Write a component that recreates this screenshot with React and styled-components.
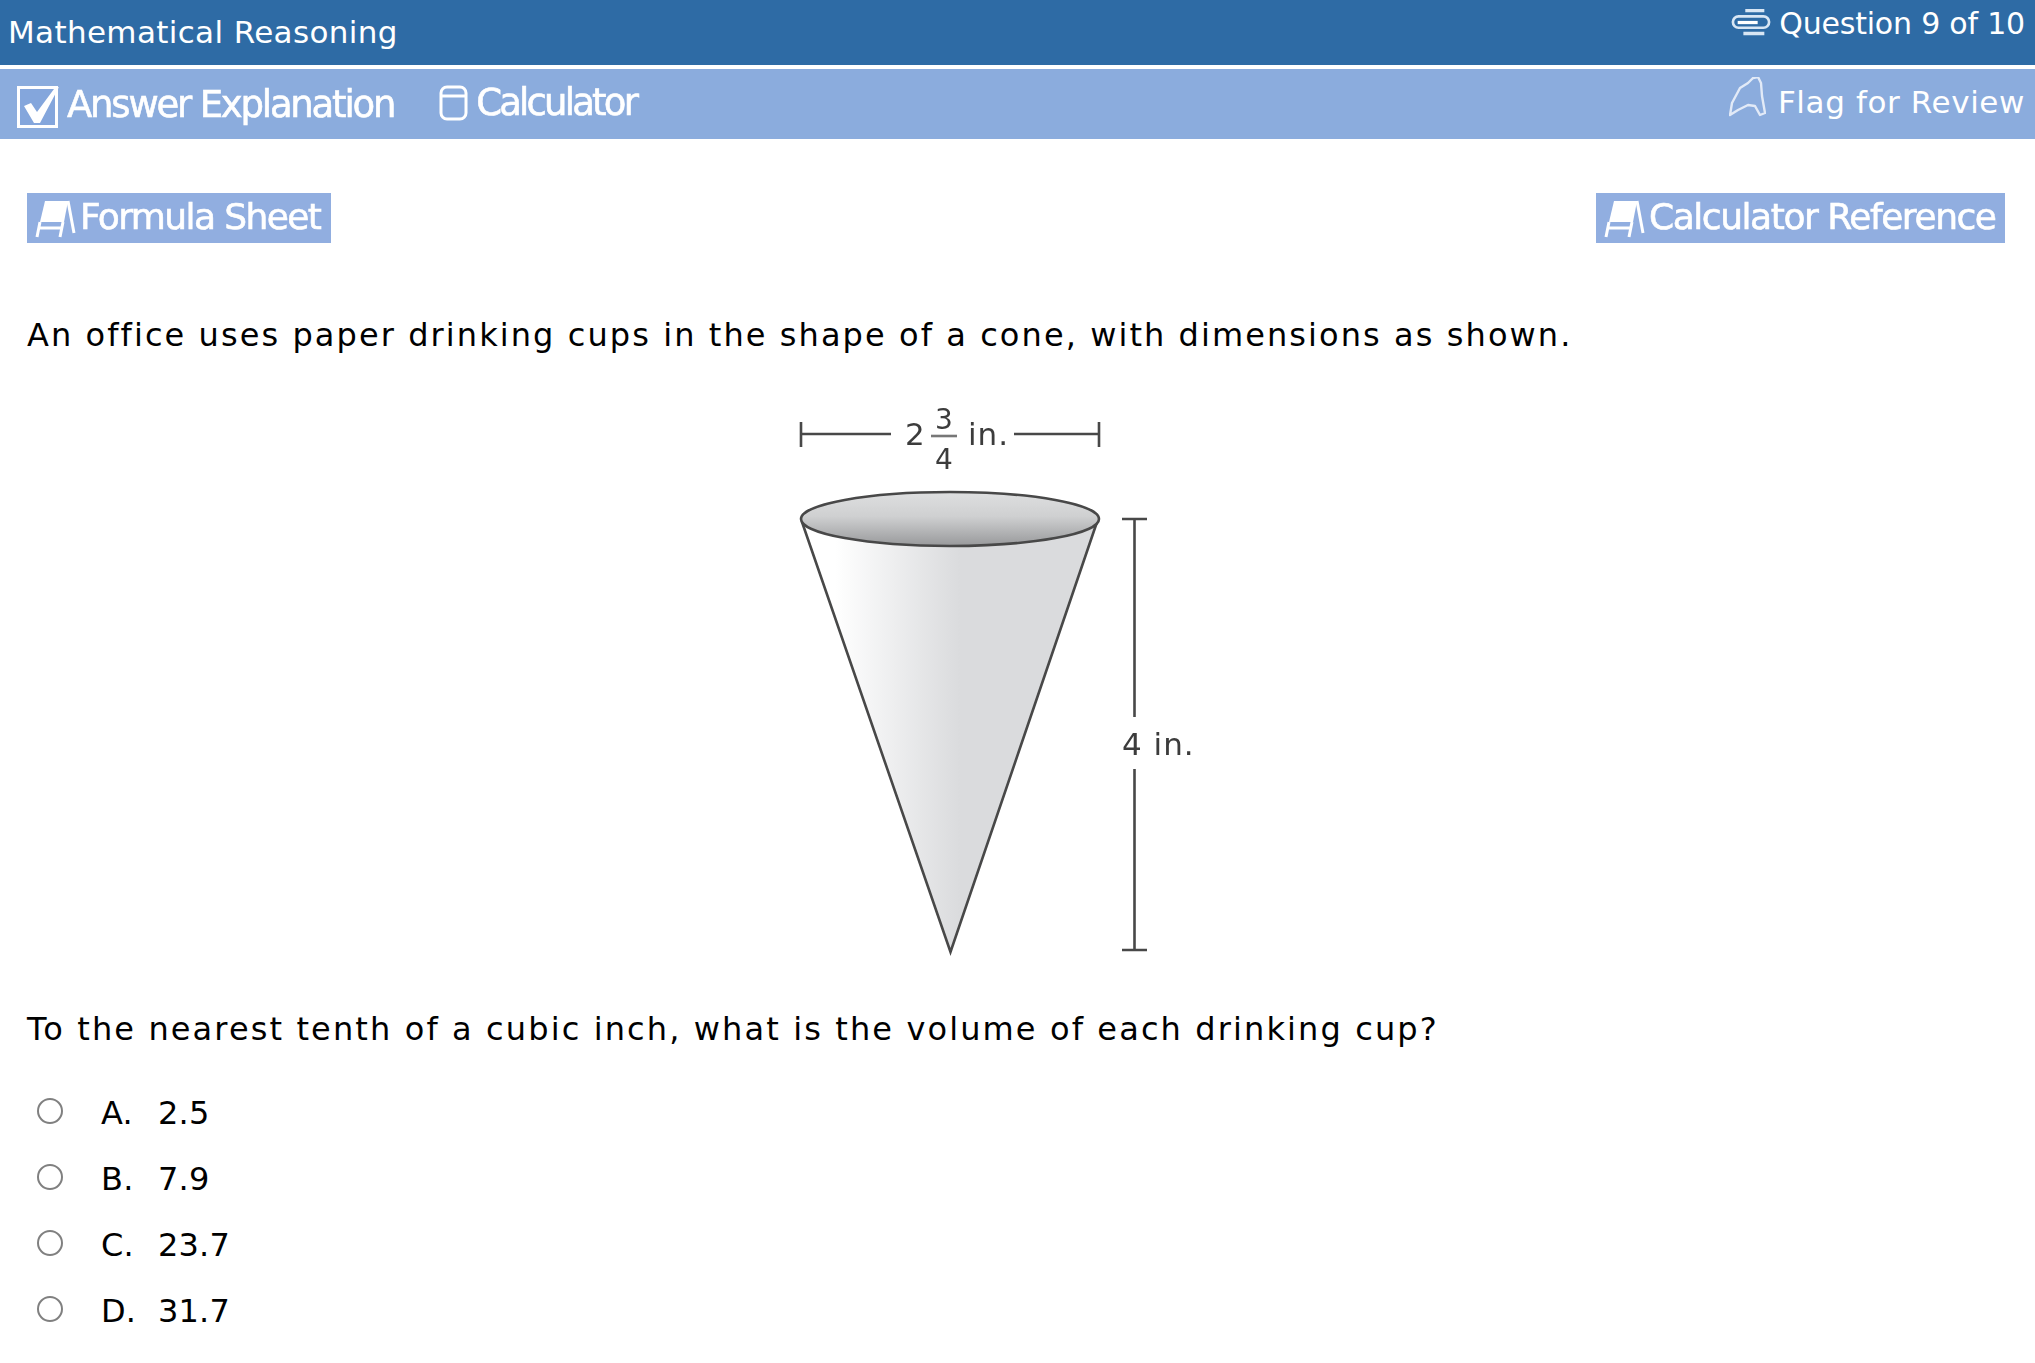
import React from 'react';
import styled, { createGlobalStyle } from 'styled-components';

const GlobalStyle = createGlobalStyle`
  html, body { margin:0; padding:0; background:#fff; }
  body { font-family:"DejaVu Sans", Verdana, sans-serif; color:#000; }
`

const TitleBar = styled.header`
  height:65px;
  background:#2e6ba5;
  color:#fff;
  display:flex;
  justify-content:space-between;
  padding:0 10px 0 8px;
  margin-bottom:4px;
`
const Title = styled.div`
  font-size:31px;
  line-height:30px;
  margin-top:17px;
  letter-spacing:.35px;
`
const Counter = styled.div`
  display:flex;
  gap:8px;
  font-size:30px;
  line-height:30px;
  margin-top:9px;
  letter-spacing:-.2px;
`
const ToolBar = styled.nav`
  height:70px;
  background:#8bacdd;
  color:#fff;
  display:flex;
  justify-content:space-between;
  padding:0 10px 0 17px;
`
const ToolGroup = styled.div`
  display:flex;
  align-items:flex-start;
`
const BlurLabel = styled.span`
  display:inline-block;
  font-size:${props => props.size || 37}px;
  line-height:40px;
  letter-spacing:${props => props.spacing}px;
  margin-left:${props => props.left}px;
  margin-top:${props => props.top}px;
  filter:blur(.7px);
  -webkit-text-stroke:.6px #fff;
  white-space:nowrap;
`
const ToolIcon = styled.svg`
  flex:none;
  margin-left:${props => props.left || 0}px;
  margin-top:${props => props.top}px;
`
const StackGlyph = styled.svg`
  flex:none;
  margin-top:-1px;
`
const Flag = styled.div`
  display:flex;
  gap:12px;
  font-size:31px;
  line-height:30px;
  letter-spacing:.6px;
  padding-top:8px;
`
const FlagText = styled.span`
  padding-top:10px;
`
const Content = styled.main`
  padding:54px 30px 0 27px;
`
const RefRow = styled.div`
  display:flex;
  justify-content:space-between;
`
const RefButton = styled.button`
  display:flex;
  align-items:flex-start;
  height:50px;
  width:${props => props.width}px;
  padding:0 0 0 8px;
  border:none;
  background:#91aee0;
  color:#fff;
  font-family:inherit;
`
const Question = styled.p`
  margin:${props => props.top}px 0 0;
  font-size:32px;
  line-height:40px;
  letter-spacing:${props => props.spacing}px;
  white-space:nowrap;
`
const Figure = styled.figure`
  margin:39px 0 0 763px;
  height:576px;
  filter:blur(.35px);
`
const DiagramText = styled.text`
  font-family:"DejaVu Sans", Verdana, sans-serif;
  font-size:${props => props.size || 31}px;
  fill:#3c3c3c;
  letter-spacing:1px;
`
const Choices = styled.ul`
  list-style:none;
  margin:31px 0 0 10px;
  padding:0;
`
const Choice = styled.li`
  display:flex;
  align-items:center;
  height:66px;
  font-size:32px;
  letter-spacing:.2px;
`
const Radio = styled.input`
  appearance:none;
  flex:none;
  width:26px;
  height:26px;
  margin:-4px 38px 0 0;
  border:2px solid #808080;
  border-radius:50%;
  background:#fff;
`
const Letter = styled.span`
  width:57px;
`

const CheckIcon = () => (
  <ToolIcon width="44" height="44" viewBox="0 0 44 44" top={15}>
    <rect x="1.5" y="3.5" width="38" height="39" fill="#84a6dc" stroke="#fff" strokeWidth="3" />
    <path d="M7 22l7-3 6 9L37 5l5-2-19 36h-6z" fill="#fff" />
  </ToolIcon>
)

const CalcIcon = () => (
  <ToolIcon width="29" height="36" viewBox="0 0 29 36" left={45} top={16}>
    <rect x="2" y="2" width="25" height="32" rx="6" fill="none" stroke="#fff" strokeWidth="3" />
    <path d="M2 11h25" stroke="#fff" strokeWidth="3" />
  </ToolIcon>
)

const FrameIcon = () => (
  <ToolIcon width="41" height="38" viewBox="0 0 41 38" top={7}>
    <path d="M10 1h23l-4 21H5z" fill="#fff" />
    <path d="M33 1l6 32M5 22L2 37M28 22l-3 15M4 28h23" fill="none" stroke="#fff" strokeWidth="3" />
  </ToolIcon>
)

const StackIcon = () => (
  <StackGlyph width="40" height="30" viewBox="0 0 42 30">
    <path d="M15 2h20M13 26h22" stroke="#d8e6f4" strokeWidth="3.6" />
    <rect x="2" y="8" width="38" height="12" rx="6" fill="none" stroke="#d8e6f4" strokeWidth="2.8" />
    <path d="M7 14.5h21" stroke="#fff" strokeWidth="3.4" />
  </StackGlyph>
)

const FlagIcon = () => (
  <svg width="37" height="40" viewBox="0 0 37 40">
    <path d="M1 38l2-12 8-15 8-5 5-5 5-1 3 6 1 13 3 17-5 2-5-9-7-1-10 5z" fill="none" stroke="#e2eaf7" strokeWidth="2.4" strokeLinejoin="round" />
  </svg>
)

const ConeDiagram = () => (
  <svg width="420" height="576" viewBox="790 395 420 576">
    <defs>
      <linearGradient id="coneSide" x1="835" x2="960" y1="0" y2="0" gradientUnits="userSpaceOnUse">
        <stop offset="0" stopColor="#ffffff" />
        <stop offset="1" stopColor="#dadbdd" />
      </linearGradient>
      <linearGradient id="coneRim" x1="0" x2="0" y1="0" y2="1">
        <stop offset="0" stopColor="#dedfe0" />
        <stop offset=".45" stopColor="#cfd0d1" />
        <stop offset="1" stopColor="#98999b" />
      </linearGradient>
    </defs>
    <g stroke="#484848" strokeWidth="2.6" fill="none">
      <path d="M801 423v25M801 435h90M1014 435h85M1099 423v25" />
      <path d="M931 437h26" stroke="#777" />
      <path d="M1122 520h25M1134.5 520v198M1134.5 770v181M1122 951h25" />
      <path d="M802 523L950.5 953 1097 523" fill="url(#coneSide)" />
      <ellipse cx="950" cy="520" rx="149" ry="27" fill="url(#coneRim)" />
    </g>
    <DiagramText x="905" y="446">2</DiagramText>
    <DiagramText x="935" y="430" size={28}>3</DiagramText>
    <DiagramText x="935" y="470" size={28}>4</DiagramText>
    <DiagramText x="968" y="446">in.</DiagramText>
    <DiagramText x="1122" y="756">4 in.</DiagramText>
  </svg>
)

const choices = [
  ['A.', '2.5'],
  ['B.', '7.9'],
  ['C.', '23.7'],
  ['D.', '31.7'],
];

export default function App() {
  return (
    <>
      <GlobalStyle />
      <TitleBar>
        <Title>Mathematical Reasoning</Title>
        <Counter><StackIcon />Question 9 of 10</Counter>
      </TitleBar>
      <ToolBar>
        <ToolGroup>
          <CheckIcon />
          <BlurLabel spacing={-2.2} left={6} top={16}>Answer Explanation</BlurLabel>
          <CalcIcon />
          <BlurLabel spacing={-2.8} left={8} top={14}>Calculator</BlurLabel>
        </ToolGroup>
        <Flag>
          <FlagIcon />
          <FlagText>Flag for Review</FlagText>
        </Flag>
      </ToolBar>
      <Content>
        <RefRow>
          <RefButton width={304}>
            <FrameIcon />
            <BlurLabel size={36} spacing={-1.6} left={4} top={4}>Formula Sheet</BlurLabel>
          </RefButton>
          <RefButton width={409}>
            <FrameIcon />
            <BlurLabel size={36} spacing={-1.45} left={4} top={4}>Calculator Reference</BlurLabel>
          </RefButton>
        </RefRow>
        <Question top={72} spacing={2.08}>An office uses paper drinking cups in the shape of a cone, with dimensions as shown.</Question>
        <Figure><ConeDiagram /></Figure>
        <Question top={39} spacing={2.12}>To the nearest tenth of a cubic inch, what is the volume of each drinking cup?</Question>
        <Choices>
          {choices.map(([letter, value]) => (
            <Choice key={letter}>
              <Radio type="radio" name="answer" />
              <Letter>{letter}</Letter>
              {value}
            </Choice>
          ))}
        </Choices>
      </Content>
    </>
  );
}
